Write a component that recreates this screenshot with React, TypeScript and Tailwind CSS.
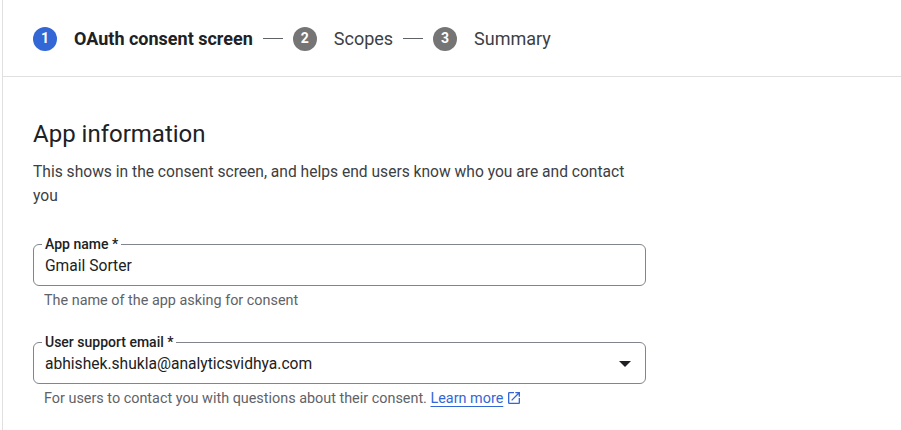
const steps = [
  { n: 1, label: "OAuth consent screen", active: true },
  { n: 2, label: "Scopes", active: false },
  { n: 3, label: "Summary", active: false },
];

function ExternalIcon() {
  return (
    <svg viewBox="0 0 24 24" className="ml-[3px] inline-block h-[16px] w-[16px] align-[-3px]" fill="currentColor">
      <path d="M19 19H5V5h7V3H5a2 2 0 0 0-2 2v14a2 2 0 0 0 2 2h14c1.1 0 2-.9 2-2v-7h-2v7zM14 3v2h3.59l-9.83 9.83 1.41 1.41L19 6.41V10h2V3h-7z" />
    </svg>
  );
}

export default function App() {
  return (
    <div
      className="h-[430px] w-[901px] overflow-hidden bg-white pl-[2px] text-[#202124]"
      style={{ fontFamily: "Roboto, 'Liberation Sans', sans-serif" }}
    >
      <div className="h-full border-l border-[#e0e0e0]">
        {/* Stepper */}
        <div className="flex h-[77px] items-center border-b border-[#e0e0e0] pl-[30px] pt-[1px]">
          {steps.map((s, i) => (
            <div key={s.n} className="flex items-center">
              {i > 0 && <span className="mx-[10px] h-px w-[20px] bg-[#5f6368]" />}
              <span
                className={
                  "flex h-[24px] w-[24px] items-center justify-center rounded-full text-[14px] font-bold text-white " +
                  (s.active ? "bg-[#3367d6]" : "bg-[#757575]")
                }
              >
                {s.n}
              </span>
              <span
                className={
                  "ml-[17px] text-[18px] " + (s.active ? "font-bold text-[#202124]" : "text-[#3c4043]")
                }
              >
                {s.label}
              </span>
            </div>
          ))}
        </div>

        {/* Form */}
        <div className="w-[643px] pl-[30px] pt-[41px]">
          <h2 className="text-[24px] leading-[32px] text-[#202124]">App information</h2>
          <p className="mt-[10px] text-[15.6px] leading-[24px] text-[#3c4043]">
            This shows in the consent screen, and helps end users know who you are and contact you
          </p>

          <fieldset className="mt-[29px] h-[49px] rounded-[6px] border border-[#80868b] px-[8px]">
            <legend className="px-[3px] text-[14px] font-medium leading-[14px] text-[#202124]">App name *</legend>
            <div className="pl-[3px] pt-[4px] text-[15.6px] leading-[22px] text-[#202124]">Gmail Sorter</div>
          </fieldset>
          <p className="mt-[7px] pl-[11px] text-[14.4px] leading-[16px] text-[#5f6368]">
            The name of the app asking for consent
          </p>

          <fieldset className="mt-[26px] h-[49px] rounded-[6px] border border-[#80868b] px-[8px]">
            <legend className="px-[3px] text-[14px] font-medium leading-[14px] text-[#202124]">
              User support email *
            </legend>
            <div className="flex items-center justify-between pl-[3px] pt-[4px] text-[15.6px] leading-[22px] text-[#202124]">
              <span>abhishek.shukla@analyticsvidhya.com</span>
              <span className="mr-[6px] h-0 w-0 border-x-[6px] border-t-[6px] border-x-transparent border-t-[#202124]" />
            </div>
          </fieldset>
          <p className="mt-[6px] pl-[11px] text-[14.4px] leading-[16px] text-[#5f6368]">
            For users to contact you with questions about their consent.{" "}
            <a href="#" className="text-[#3367d6] underline underline-offset-[3px]">
              Learn more
            </a>
            <span className="text-[#3367d6]">
              <ExternalIcon />
            </span>
          </p>
        </div>
      </div>
    </div>
  );
}
